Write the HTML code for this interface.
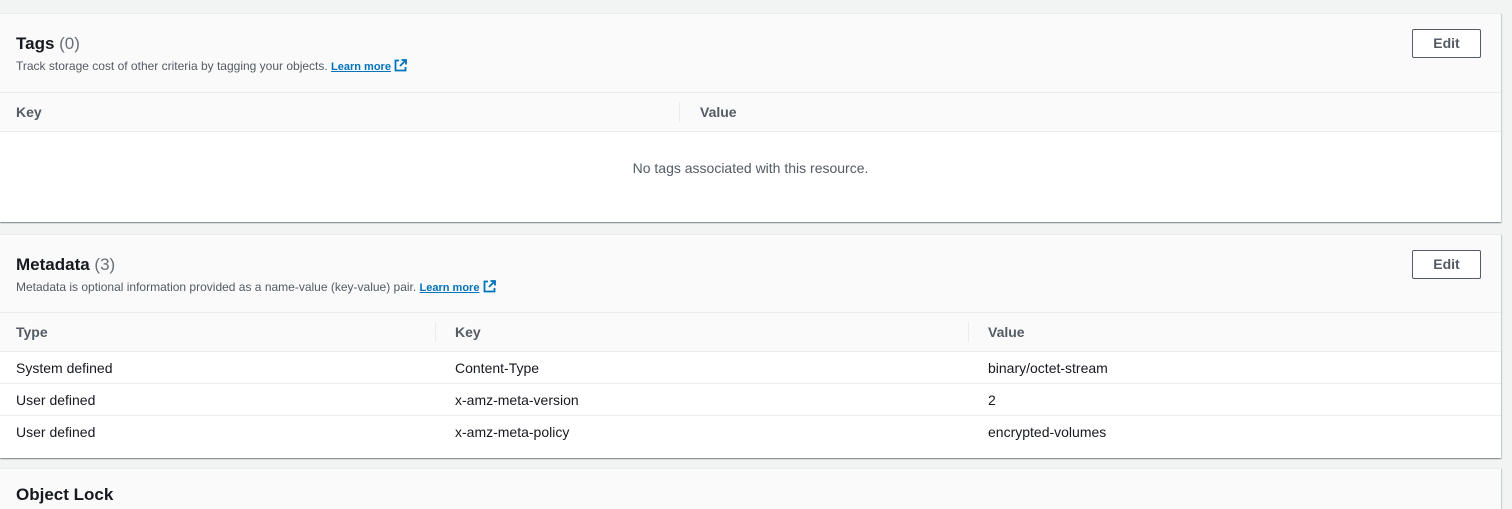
<!DOCTYPE html>
<html><head><style>
body{margin:0;background:#f2f3f3;font-family:"Liberation Sans",sans-serif;color:#16191f;width:1512px;height:493px;overflow:hidden;position:relative}
.p{position:absolute;left:0;width:1501px;background:#fff;box-shadow:0 1px 1px 0 rgba(0,28,36,.3),1px 1px 1px 0 rgba(0,28,36,.15),-1px 1px 1px 0 rgba(0,28,36,.15);border-top:1px solid #eaeded}
.hd{background:#fafafa;position:relative;border-bottom:1px solid #eaeded}
.t{position:absolute;left:16px;top:20px;font-size:17px;font-weight:bold;color:#16191f}
.t span{font-weight:normal;color:#687078}
.d{position:absolute;left:16px;top:45px;font-size:12px;color:#545b64}
.d a{color:#0073bb;font-weight:bold;text-decoration:underline;font-size:11px}
.e{position:absolute;left:1412px;top:15px;width:67px;height:27px;border:1px solid #545b64;border-radius:2px;background:#fff;font-size:14px;font-weight:bold;color:#545b64;text-align:center;line-height:27px}
.ch{background:#fafafa;height:38px;border-bottom:1px solid #eaeded;position:relative;font-size:14px;font-weight:bold;color:#545b64}
.ch div,.r div{position:absolute;top:0;line-height:38px}
.sep{position:absolute;top:9px;width:1px;height:20px;background:#eaeded}
.r{height:31px;border-bottom:1px solid #eaeded;position:relative;font-size:14px;color:#16191f}
.r div{line-height:32px}
</style></head><body>
<div class="p" style="top:13px;height:208px">
 <div class="hd" style="height:78px">
  <div class="t">Tags <span>(0)</span></div>
  <div class="d">Track storage cost of other criteria by tagging your objects. <a>Learn more</a> <svg width="13" height="13" viewBox="0 0 13 13" style="vertical-align:-2px"><path d="M5 1.5H1.5v10h10V8" fill="none" stroke="#0073bb" stroke-width="1.8"/><path d="M7.5 1h4.5v4.5M12 1L6 7" fill="none" stroke="#0073bb" stroke-width="1.8"/></svg></div>
  <div class="e">Edit</div>
 </div>
 <div class="ch"><div style="left:16px">Key</div><span class="sep" style="left:679px"></span><div style="left:700px">Value</div></div>
 <div style="text-align:center;font-size:14px;color:#545b64;padding-top:28px">No tags associated with this resource.</div>
</div>
<div class="p" style="top:234px;height:223px">
 <div class="hd" style="height:77px">
  <div class="t">Metadata <span>(3)</span></div>
  <div class="d">Metadata is optional information provided as a name-value (key-value) pair. <a>Learn more</a> <svg width="13" height="13" viewBox="0 0 13 13" style="vertical-align:-2px"><path d="M5 1.5H1.5v10h10V8" fill="none" stroke="#0073bb" stroke-width="1.8"/><path d="M7.5 1h4.5v4.5M12 1L6 7" fill="none" stroke="#0073bb" stroke-width="1.8"/></svg></div>
  <div class="e">Edit</div>
 </div>
 <div class="ch"><div style="left:16px">Type</div><span class="sep" style="left:435px"></span><div style="left:455px">Key</div><span class="sep" style="left:968px"></span><div style="left:988px">Value</div></div>
 <div class="r"><div style="left:16px">System defined</div><div style="left:455px">Content-Type</div><div style="left:988px">binary/octet-stream</div></div>
 <div class="r"><div style="left:16px">User defined</div><div style="left:455px">x-amz-meta-version</div><div style="left:988px">2</div></div>
 <div class="r" style="border:0"><div style="left:16px">User defined</div><div style="left:455px">x-amz-meta-policy</div><div style="left:988px">encrypted-volumes</div></div>
</div>
<div class="p" style="top:468px;height:40px;background:#fafafa">
 <div class="t" style="top:16px">Object Lock</div>
</div>
</body></html>
